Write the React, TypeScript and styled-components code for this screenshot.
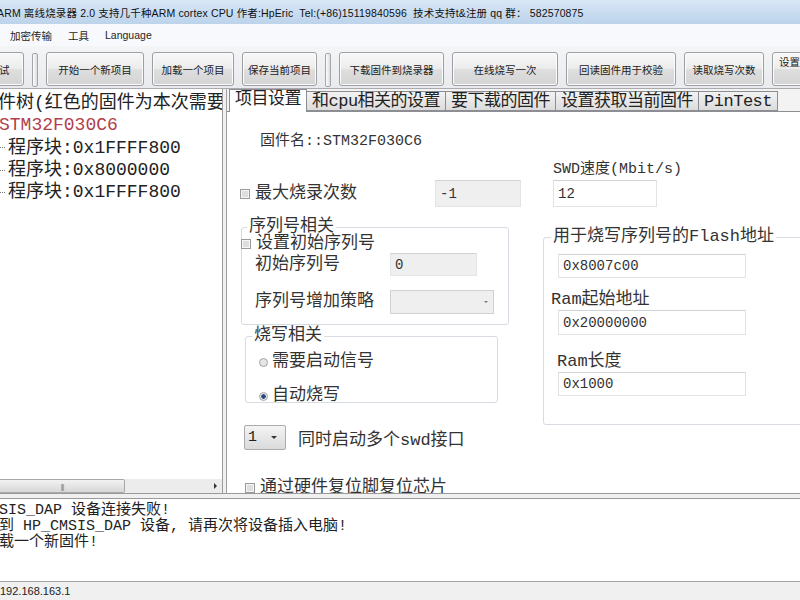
import React from "react";
import styled, { createGlobalStyle } from "styled-components";

const SANS = `"Liberation Sans", "Noto Sans CJK SC", sans-serif`;
const MONO = `"Liberation Mono", "Noto Sans CJK SC", monospace`;

const GlobalStyle = createGlobalStyle`
  html, body {
    margin: 0;
    padding: 0;
    background: #f0f0f0;
  }
  body {
    width: 800px;
    height: 600px;
    overflow: hidden;
  }
`;

const Window = styled.div`
  width: 800px;
  height: 600px;
  display: flex;
  flex-direction: column;
  overflow: hidden;
  background: #f0f0f0;
  font-family: ${SANS};
  color: #1e1e1e;
`;

const TitleBar = styled.div`
  height: 24px;
  flex: none;
  display: flex;
  align-items: center;
  background: linear-gradient(#d8e7f6, #bcd3eb);
  font-size: 10.5px;
  letter-spacing: 0.15px;
  white-space: nowrap;
  color: #111;
`;

const TitleText = styled.span`
  margin-left: -3px;
`;

const MenuBar = styled.div`
  height: 22px;
  flex: none;
  display: flex;
  align-items: center;
  padding-left: 2px;
  background: #f7f9fc;
  font-size: 10.5px;
`;

const MenuItem = styled.span`
  padding: 0 8px;
`;

const ToolBar = styled.div`
  height: 43px;
  flex: none;
  display: flex;
  align-items: flex-start;
  gap: 8px;
  padding-top: 6px;
  box-sizing: border-box;
  background: linear-gradient(#f4f5f7, #e8eaed);
  border-bottom: 1px solid #a9abae;
  white-space: nowrap;
`;

const ToolButton = styled.button<{ $w: number; $top?: boolean }>`
  flex: none;
  width: ${(p) => p.$w}px;
  height: 34px;
  margin: 0;
  padding: ${(p) => (p.$top ? "1px 6px 0" : "0")};
  border: 1px solid #9d9fa2;
  border-radius: 3px;
  background: linear-gradient(#f8f8f8 0%, #ececec 48%, #dedede 52%, #d4d4d4 100%);
  box-shadow: inset 0 0 0 1px #fbfbfb;
  font-family: ${SANS};
  font-size: 10.5px;
  color: #222;
  display: flex;
  align-items: ${(p) => (p.$top ? "flex-start" : "center")};
  justify-content: ${(p) => (p.$top ? "flex-start" : "center")};
  white-space: nowrap;
  overflow: hidden;
`;

const CutButton = styled(ToolButton)`
  margin-left: -26px;
`;

const Grip = styled.div`
  flex: none;
  width: 4px;
  height: 32px;
  margin-top: 1px;
  border: 1px solid #a4a6a9;
  border-radius: 2px;
  background: linear-gradient(90deg, #fdfdfd, #dcdcdc);
`;

const Main = styled.div`
  height: 405px;
  flex: none;
  display: flex;
  border-bottom: 1px solid #9a9a9a;
  box-sizing: border-box;
`;

const TreePanel = styled.div`
  width: 222px;
  flex: none;
  display: flex;
  flex-direction: column;
  background: #fff;
  border-right: 1px solid #9c9c9c;
  overflow: hidden;
`;

const TreeBody = styled.div`
  flex: 1;
  padding-top: 3px;
  overflow: hidden;
  white-space: nowrap;
  font-family: ${MONO};
  font-size: 18px;
  line-height: 22.3px;
  color: #222;
`;

const TreeRow = styled.div<{ $indent: number; $red?: boolean }>`
  margin-left: ${(p) => p.$indent}px;
  color: ${(p) => (p.$red ? "#b3404c" : "#222")};
  display: flex;
  align-items: center;
  overflow: hidden;
`;

const TreeDash = styled.span`
  width: 5px;
  margin-right: 3px;
  border-top: 1px dotted #777;
`;

const HScroll = styled.div`
  height: 14px;
  flex: none;
  display: flex;
  align-items: center;
  background: #ececec;
`;

const ScrollThumb = styled.div`
  width: 124px;
  height: 12px;
  border: 1px solid #a8a8a8;
  border-left: none;
  border-radius: 0 2px 2px 0;
  background: linear-gradient(#f2f2f2, #d8d8d8);
  display: flex;
  align-items: center;
  justify-content: center;
  font-size: 7px;
  color: #777;
  letter-spacing: -1px;
`;

const ScrollArrow = styled.div`
  margin-left: auto;
  margin-right: 5px;
  width: 0;
  height: 0;
  border-top: 3px solid transparent;
  border-bottom: 3px solid transparent;
  border-left: 3px solid #333;
`;

const Splitter = styled.div`
  width: 3px;
  flex: none;
  background: #f0f0f0;
`;

const TabArea = styled.div`
  flex: 1;
  display: flex;
  flex-direction: column;
  min-width: 0;
  border-left: 1px solid #a0a0a0;
  background: #f3f3f3;
`;

const TabStrip = styled.div`
  height: 22px;
  flex: none;
  display: flex;
  align-items: flex-end;
  gap: 0;
  padding-left: 2px;
  position: relative;
  z-index: 1;
`;

const Tab = styled.div<{ $active?: boolean }>`
  height: ${(p) => (p.$active ? 23 : 20)}px;
  margin-bottom: ${(p) => (p.$active ? -1 : 0)}px;
  padding: 0 5px;
  box-sizing: border-box;
  border: 1px solid #8c8e94;
  border-bottom: ${(p) => (p.$active ? "none" : "1px solid #8c8e94")};
  border-left: ${(p) => (p.$active ? "1px solid #8c8e94" : "none")};
  background: ${(p) => (p.$active ? "#fff" : "linear-gradient(#f3f3f3, #dcdcdc)")};
  font-family: ${MONO};
  font-size: 17px;
  letter-spacing: -0.5px;
  line-height: 20px;
  color: #222;
  white-space: nowrap;
`;

const TabPanel = styled.div`
  flex: 1;
  background: #fff;
  border-top: 1px solid #8c8e94;
  overflow: hidden;
  font-family: ${MONO};
  font-size: 17px;
  color: #333;
  white-space: nowrap;
`;

const FirmwareName = styled.div`
  margin: 20px 0 0 33px;
  font-size: 15px;
  line-height: 20px;
`;

const TopRow = styled.div`
  display: flex;
  align-items: flex-end;
  margin-top: 8px;
  padding-left: 13px;
`;

const CheckLabel = styled.label<{ $w?: number }>`
  display: flex;
  align-items: center;
  gap: 5px;
  width: ${(p) => (p.$w ? `${p.$w}px` : "auto")};
  height: 27px;
  line-height: 20px;
`;

const CheckBox = styled.span<{ $nudge?: number }>`
  flex: none;
  width: 10px;
  height: 10px;
  margin-left: ${(p) => p.$nudge || 0}px;
  box-sizing: border-box;
  border: 1px solid #9a9a9a;
  background: #dedede;
  box-shadow: inset 0 0 0 1px #f6f6f6;
`;

const Field = styled.div<{ $w: number; $h: number; $disabled?: boolean }>`
  flex: none;
  width: ${(p) => p.$w}px;
  height: ${(p) => p.$h}px;
  box-sizing: border-box;
  border: 1px solid #e1e3e6;
  border-top-color: #cfd2d6;
  background: ${(p) => (p.$disabled ? "#efefef" : "#fff")};
  padding-left: 4px;
  display: flex;
  align-items: center;
  font-size: 14px;
  color: #333;
`;

const SwdColumn = styled.div`
  margin-left: 32px;
  display: flex;
  flex-direction: column;
`;

const SmallLabel = styled.div`
  font-size: 15px;
  line-height: 20px;
`;

const Columns = styled.div`
  display: flex;
  align-items: flex-start;
  margin-top: 9px;
`;

const LeftColumn = styled.div`
  width: 268px;
  margin-left: 14px;
  flex: none;
  display: flex;
  flex-direction: column;
`;

const RightColumn = styled.div`
  width: 300px;
  margin-left: 34px;
  margin-top: 10px;
  flex: none;
`;

const Group = styled.fieldset<{ $w?: number; $ml?: number; $pb: number }>`
  margin: 0 0 0 ${(p) => p.$ml || 0}px;
  width: ${(p) => (p.$w ? `${p.$w}px` : "auto")};
  padding: 0 0 ${(p) => p.$pb}px 0;
  min-inline-size: 0;
  box-sizing: border-box;
  border: 1px solid #d6dce1;
  border-radius: 3px;
`;

const Legend = styled.legend<{ $ml: number }>`
  margin-left: ${(p) => p.$ml}px;
  padding: 0 2px;
  font-size: 17px;
  line-height: 22px;
  color: #333;
`;

const GroupCheck = styled(CheckLabel)`
  height: 18px;
  margin-top: -3px;
`;

const FieldRow = styled.div<{ $mt: number }>`
  display: flex;
  align-items: center;
  margin-top: ${(p) => p.$mt}px;
  padding-left: 13px;
`;

const FieldLabel = styled.span`
  width: 135px;
  flex: none;
  line-height: 20px;
`;

const SelectBox = styled(Field)`
  justify-content: flex-end;
  padding-right: 5px;
  border-color: #cfd1d4;
`;

const DropArrow = styled.span`
  width: 0;
  height: 0;
  border-left: 2px solid transparent;
  border-right: 2px solid transparent;
  border-top: 2px solid #777;
`;

const RadioRow = styled.label<{ $mt: number }>`
  display: flex;
  align-items: center;
  gap: 4px;
  height: 12px;
  line-height: 12px;
  margin-top: ${(p) => p.$mt}px;
  padding-left: 13px;
`;

const Radio = styled.span<{ $checked?: boolean }>`
  flex: none;
  width: 9px;
  height: 9px;
  box-sizing: border-box;
  border-radius: 50%;
  border: 1px solid #a4a4a4;
  background: ${(p) =>
    p.$checked ? "radial-gradient(circle, #2b4a80 0 2px, #e8e8e8 2.5px)" : "#e6e6e6"};
`;

const ComboRow = styled.div`
  display: flex;
  align-items: center;
  gap: 12px;
  margin: 22px 0 0 3px;
`;

const Combo = styled.div`
  width: 42px;
  height: 25px;
  box-sizing: border-box;
  border: 1px solid #a9abae;
  border-radius: 2px;
  background: linear-gradient(#f4f4f4, #dadada);
  display: flex;
  align-items: center;
  justify-content: space-between;
  padding: 0 8px 0 3px;
  font-size: 15px;
  color: #222;
`;

const ComboArrow = styled(DropArrow)`
  border-left-width: 3px;
  border-right-width: 3px;
  border-top: 3px solid #333;
`;

const ResetRow = styled(CheckLabel)`
  height: 16px;
  margin: 30px 0 0 4px;
`;

const AddrInput = styled(Field)`
  margin-left: 14px;
`;

const AddrLabel = styled.div<{ $ml: number; $mt: number }>`
  align-self: flex-start;
  margin: ${(p) => p.$mt}px 0 0 ${(p) => p.$ml}px;
  font-size: 17px;
  line-height: 20px;
`;

const AddrStack = styled.div`
  display: flex;
  flex-direction: column;
  align-items: flex-start;
  margin-top: 6px;
`;

const Spacer = styled.div`
  height: 4px;
  flex: none;
  background: #f0f0f0;
`;

const LogArea = styled.div`
  height: 84px;
  flex: none;
  box-sizing: border-box;
  background: #fff;
  border-top: 1px solid #9a9a9a;
  border-bottom: 1px solid #a3a3a3;
  padding-top: 4px;
  overflow: hidden;
  font-family: ${MONO};
  font-size: 15px;
  line-height: 16px;
  color: #222;
  white-space: nowrap;
`;

const LogLine = styled.div`
  margin-left: -46px;
`;

const StatusBar = styled.div`
  flex: 1;
  display: flex;
  align-items: center;
  background: #f0f0f0;
  font-size: 11px;
  color: #222;
`;

const treeBlocks = ["0x1FFFF800", "0x8000000", "0x1FFFF800"];

const logLines = [
  "HP_CMSIS_DAP 设备连接失败!",
  "没有找到 HP_CMSIS_DAP 设备, 请再次将设备插入电脑!",
  "请先加载一个新固件!",
];

function App() {
  return (
    <Window>
      <GlobalStyle />
      <TitleBar>
        <TitleText>
          ARM 离线烧录器 2.0 支持几千种ARM cortex CPU 作者:HpEric&nbsp; Tel:(+86)15119840596&nbsp;
          技术支持t&amp;注册 qq 群： 582570875
        </TitleText>
      </TitleBar>

      <MenuBar>
        <MenuItem>加密传输</MenuItem>
        <MenuItem>工具</MenuItem>
        <MenuItem>Language</MenuItem>
      </MenuBar>

      <ToolBar>
        <CutButton $w={50}>测试</CutButton>
        <Grip />
        <ToolButton $w={98}>开始一个新项目</ToolButton>
        <ToolButton $w={82}>加载一个项目</ToolButton>
        <ToolButton $w={75}>保存当前项目</ToolButton>
        <Grip />
        <ToolButton $w={105}>下载固件到烧录器</ToolButton>
        <ToolButton $w={106}>在线烧写一次</ToolButton>
        <ToolButton $w={110}>回读固件用于校验</ToolButton>
        <ToolButton $w={80}>读取烧写次数</ToolButton>
        <ToolButton $w={96} $top>
          设置烧录器参数
        </ToolButton>
      </ToolBar>

      <Main>
        <TreePanel>
          <TreeBody>
            <TreeRow $indent={-20}>固件树(红色的固件为本次需要</TreeRow>
            <TreeRow $indent={-1} $red>
              STM32F030C6
            </TreeRow>
            {treeBlocks.map((addr, i) => (
              <TreeRow key={i} $indent={0}>
                <TreeDash />
                程序块:{addr}
              </TreeRow>
            ))}
          </TreeBody>
          <HScroll>
            <ScrollThumb>|||</ScrollThumb>
            <ScrollArrow />
          </HScroll>
        </TreePanel>

        <Splitter />

        <TabArea>
          <TabStrip>
            <Tab $active>项目设置</Tab>
            <Tab>和cpu相关的设置</Tab>
            <Tab>要下载的固件</Tab>
            <Tab>设置获取当前固件</Tab>
            <Tab>PinTest</Tab>
          </TabStrip>

          <TabPanel>
            <FirmwareName>固件名::STM32F030C6</FirmwareName>

            <TopRow>
              <CheckLabel $w={195}>
                <CheckBox />
                最大烧录次数
              </CheckLabel>
              <Field $w={86} $h={27} $disabled>
                -1
              </Field>
              <SwdColumn>
                <SmallLabel>SWD速度(Mbit/s)</SmallLabel>
                <Field $w={104} $h={27}>
                  12
                </Field>
              </SwdColumn>
            </TopRow>

            <Columns>
              <LeftColumn>
                <Group $pb={10}>
                  <Legend $ml={5}>序列号相关</Legend>
                  <GroupCheck>
                    <CheckBox $nudge={-1} />
                    设置初始序列号
                  </GroupCheck>
                  <FieldRow $mt={0}>
                    <FieldLabel>初始序列号</FieldLabel>
                    <Field $w={87} $h={23} $disabled>
                      0
                    </Field>
                  </FieldRow>
                  <FieldRow $mt={14}>
                    <FieldLabel>序列号增加策略</FieldLabel>
                    <SelectBox $w={104} $h={24} $disabled>
                      <DropArrow />
                    </SelectBox>
                  </FieldRow>
                </Group>

                <Group $w={253} $ml={4} $pb={0}>
                  <Legend $ml={6}>烧写相关</Legend>
                  <RadioRow $mt={9}>
                    <Radio />
                    需要启动信号
                  </RadioRow>
                  <RadioRow $mt={22}>
                    <Radio $checked />
                    自动烧写
                  </RadioRow>
                </Group>

                <ComboRow>
                  <Combo>
                    1
                    <ComboArrow />
                  </Combo>
                  同时启动多个swd接口
                </ComboRow>

                <ResetRow>
                  <CheckBox />
                  通过硬件复位脚复位芯片
                </ResetRow>
              </LeftColumn>

              <RightColumn>
                <Group $pb={28}>
                  <Legend $ml={7}>用于烧写序列号的Flash地址</Legend>
                  <AddrStack>
                    <AddrInput $w={188} $h={24}>
                      0x8007c00
                    </AddrInput>
                    <AddrLabel $ml={7} $mt={12}>
                      Ram起始地址
                    </AddrLabel>
                    <AddrInput $w={188} $h={25}>
                      0x20000000
                    </AddrInput>
                    <AddrLabel $ml={13} $mt={17}>
                      Ram长度
                    </AddrLabel>
                    <AddrInput $w={188} $h={24}>
                      0x1000
                    </AddrInput>
                  </AddrStack>
                </Group>
              </RightColumn>
            </Columns>
          </TabPanel>
        </TabArea>
      </Main>

      <Spacer />

      <LogArea>
        {logLines.map((line, i) => (
          <LogLine key={i}>{line}</LogLine>
        ))}
      </LogArea>

      <StatusBar>192.168.163.1</StatusBar>
    </Window>
  );
}

export default App;
